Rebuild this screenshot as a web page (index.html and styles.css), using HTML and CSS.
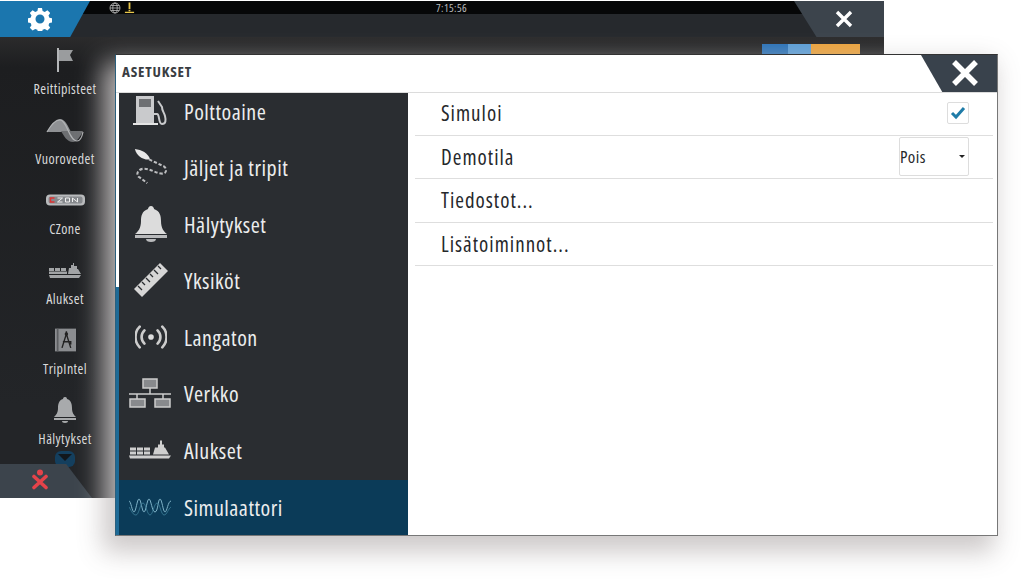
FILE: index.html
```html
<!DOCTYPE html>
<html lang="fi">
<head>
<meta charset="utf-8">
<title>Asetukset</title>
<link rel="stylesheet" href="styles.css">
</head>
<body>
<div class="backwin">
  <div class="topbar">
    <div class="gearTab">
      <svg class="gear" viewBox="0 0 24 24"><path fill-rule="evenodd" fill="#fff" d="M10 1h4l.6 3 2.2.9 2.6-1.7 2.8 2.8-1.7 2.6.9 2.2 3 .6v4l-3 .6-.9 2.2 1.7 2.6-2.8 2.8-2.6-1.7-2.200.9-.6 3h-4l-.6-3-2.200-.9-2.600 1.700-2.800-2.800 1.700-2.600-.9-2.200-3-.6v-4l3-.6.9-2.200-1.700-2.600 2.800-2.800 2.600 1.700 2.200-.9zM12 7.500a4.500 4.500 0 1 0 0 9 4.500 4.500 0 0 0 0-9z"/></svg>
    </div>
    <div class="status">
      <div class="statusIcons">
        <svg class="globe" viewBox="0 0 12 12"><g fill="none" stroke="#bbb" stroke-width=".8"><circle cx="6" cy="6" r="5"/><ellipse cx="6" cy="6" rx="2.200" ry="5"/><path d="M1 6h10M1.800 3.500h8.400M1.800 8.500h8.400"/></g></svg>
        <svg class="warn" viewBox="0 0 12 12"><path fill="#e8c64a" d="M5 0h2v7H5zM5 8h2v1.500H5zM1 10h10v1.500H1z"/></svg>
      </div>
      <span class="clock">7:15:56</span>
    </div>
    <div class="closeTab">
      <svg class="x1" viewBox="0 0 18 18"><path stroke="#fff" stroke-width="3.400" d="M2 2l14 14M16 2L2 16"/></svg>
    </div>
  </div>
  <div class="backMain">
    <aside class="side">
      <div class="sideItem">
        <svg class="sideIcon" viewBox="0 0 24 24"><path fill="#b4b6b8" d="M4 0h2v24H4z"/><path fill="#9a9c9e" d="M6 2h14l-3 5 3 6H6z"/></svg>
        <span>Reittipisteet</span>
      </div>
      <div class="sideItem">
        <svg class="sideIcon wave" viewBox="0 0 38 24"><path fill="#8f9194" d="M1 13C6 4 10 0 14 0c5 0 8 7 11 13z"/><path fill="#6d6f72" d="M15 12h22c-3 6-6 11-10 11-6 0-9-6-12-11z"/><path fill="none" stroke="#b0b2b4" stroke-width="1.200" d="M1 13C6 4 10 1 14 1c7 0 9 21 17 21 3 0 5-4 6-9"/></svg>
        <span>Vuorovedet</span>
      </div>
      <div class="sideItem">
        <svg class="sideIcon czone" viewBox="0 0 40 12"><rect x=".5" y=".5" width="39" height="11" rx="4" fill="#b8babc"/><rect x="3" y="2.500" width="34" height="7" rx="2" fill="#85888c"/><path stroke="#d33" stroke-width="1.500" fill="none" d="M9 4H5v4h4"/><path stroke="#eee" fill="none" d="M12 4h5l-5 4h5M20 4h4v4h-4zM27 8V4l5 4V4"/></svg>
        <span>CZone</span>
      </div>
      <div class="sideItem">
        <svg class="sideIcon ship" viewBox="0 0 34 16"><path fill="#a2a4a6" d="M1 12h32l-2 3H2zM1 5h5v3H1zM7 5h5v3H7zM13 5h5v3h-5zM1 8.500h18V11H1zM21 5h2V2h2V0h1v3h3v3h1l3 5H20z"/></svg>
        <span>Alukset</span>
      </div>
      <div class="sideItem">
        <svg class="sideIcon trip" viewBox="0 0 24 26"><rect width="24" height="26" fill="#8b8d90"/><rect x="2" width="2" height="26" fill="#5c5e61"/><path stroke="#222" stroke-width="1.600" fill="none" d="M13 3v3M13 6l-5 16M13 6l5 16M9 15h9v3"/><circle cx="13" cy="6" r="2" fill="#222"/></svg>
        <span>TripIntel</span>
      </div>
      <div class="sideItem">
        <svg class="sideIcon bell" viewBox="0 0 24 26"><path fill="#a8aaac" d="M12 0c2 0 2 2 2 2 4 1 5 5 5 9 0 5 2 7 4 9H1c2-2 4-4 4-9 0-4 1-8 5-9 0 0 0-2 2-2zM1 21h22v2H1zM9 24h6c0 1-1 2-3 2s-3-1-3-2z"/></svg>
        <span>Hälytykset</span>
      </div>
    </aside>
    <div class="bars"><i class="bar b1"></i><i class="bar b2"></i><i class="bar b3"></i></div>
  </div>
  <div class="moreBtn"><i class="moreArrow"></i></div>
  <div class="bottomTab">
    <svg class="person" viewBox="0 0 18 20"><circle cx="9" cy="3" r="3" fill="#e5434a"/><path stroke="#e5434a" stroke-width="3.600" stroke-linecap="round" d="M3 7l12 11M15 7L3 18"/></svg>
  </div>
</div>

<div class="dialog">
  <header class="dlgHead">
    <h1>ASETUKSET</h1>
    <div class="dlgClose">
      <svg class="x2" viewBox="0 0 26 26"><path stroke="#fff" stroke-width="5.500" d="M2 2l22 22M24 2L2 24"/></svg>
    </div>
  </header>
  <div class="dlgBody">
    <div class="scroll"><i class="thumb"></i></div>
    <nav class="nav">
      <ul class="navList">
        <li class="navItem">
          <svg class="navIcon" viewBox="0 0 36 32"><path fill="#c9cacc" d="M3 1h18v27H3z"/><path fill="#6e7073" d="M6 4h12v8H6z"/><path fill="#e4e4e4" d="M0 28h25v2H0z"/><path fill="none" stroke="#c9cacc" stroke-width="2" d="M21 19h3c3 0 1 10 5 10s4-4 3-8-3-5-3-9l-4-6"/></svg>
          <span>Polttoaine</span>
        </li>
        <li class="navItem">
          <svg class="navIcon" viewBox="0 0 36 38"><path fill="#e8e8e8" d="M1 0c7 1 14 4 16 11-7 1-14-3-16-11z"/><path fill="none" stroke="#bdbec0" stroke-width="2.200" stroke-dasharray="3.500 2" d="M16 11l15 7c4 2 4 8-1 8-7 0-13-6-21-5-6 1-7 7-3 9l8 6"/></svg>
          <span>Jäljet ja tripit</span>
        </li>
        <li class="navItem">
          <svg class="navIcon" viewBox="0 0 34 36"><path fill="#dcdcdc" d="M17 0c2 0 3 2 3 3 6 2 7 7 7 12 0 7 3 11 6 13H1c3-2 6-6 6-13 0-5 1-10 7-12 0-1 1-3 3-3z"/><path fill="#b9babc" d="M1 29h32v3H1z"/><path fill="#b9babc" d="M12 33h10c0 2-2 3-5 3s-5-1-5-3z"/></svg>
          <span>Hälytykset</span>
        </li>
        <li class="navItem">
          <svg class="navIcon" viewBox="0 0 36 36"><path fill="#d6d6d6" d="M1 27L27 1l8 8L9 35z"/><path stroke="#2a2d31" stroke-width="1.300" d="M5 24l4 4M9 20l3 3M13 16l4 4M17 12l3 3M21 8l4 4M25 4l3 3"/></svg>
          <span>Yksiköt</span>
        </li>
        <li class="navItem">
          <svg class="navIcon wifi" viewBox="0 0 34 26"><circle cx="17" cy="13" r="3" fill="#ddd"/><path fill="none" stroke="#ccc" stroke-width="2.800" stroke-linecap="round" d="M10 6c-4 4-4 10 0 14M24 6c4 4 4 10 0 14M5 2C-1 8-1 18 5 24M29 2c6 6 6 16 0 22"/></svg>
          <span>Langaton</span>
        </li>
        <li class="navItem">
          <svg class="navIcon wide" viewBox="0 0 42 30"><rect x="14" y="1" width="14" height="9" fill="#888a8d" stroke="#ccc" stroke-width="1.500"/><path stroke="#ccc" stroke-width="1.500" fill="none" d="M21 10v6M0 16h42M8 16v5M34 16v5"/><rect x="1" y="21" width="15" height="8" fill="#888a8d" stroke="#ccc" stroke-width="1.500"/><rect x="26" y="21" width="15" height="8" fill="#888a8d" stroke="#ccc" stroke-width="1.500"/></svg>
          <span>Verkko</span>
        </li>
        <li class="navItem">
          <svg class="navIcon wide" viewBox="0 0 42 19"><path fill="#cfcfcf" d="M0 15h42l-2 3H1zM1 7h6v3H1zM8 7h6v3H8zM15 7h6v3h-6zM1 11h6v3H1zM8 11h6v3H8zM15 11h6v3h-6zM26 7h3V4h2V0h2v4h2v3h1l4 7H24z"/></svg>
          <span>Alukset</span>
        </li>
        <li class="navItem active">
          <svg class="navIcon wide" viewBox="0 0 42 20"><path fill="none" stroke="#7fb3c8" stroke-width="1" d="M0 4c2 0 3 11 5 11s3-13 5-13 3 13 5 13 3-13 5-13 3 13 6 13 3-13 5-13 3 13 5 13 3-11 6-11"/><path fill="none" stroke="#3d7f99" stroke-width=".8" d="M0 10c3 5 4 8 7 8s4-12 7-12 4 12 7 12 4-12 7-12 4 12 7 12 4-6 7-8"/></svg>
          <span>Simulaattori</span>
        </li>
      </ul>
    </nav>
    <section class="content">
      <div class="row">
        <span>Simuloi</span>
        <span class="check"><svg viewBox="0 0 16 14"><path fill="none" stroke="#1f7ca8" stroke-width="3" d="M2 7l4 4 8-9"/></svg></span>
      </div>
      <div class="row">
        <span>Demotila</span>
        <span class="select"><span>Pois</span><i class="caret"></i></span>
      </div>
      <div class="row"><span>Tiedostot...</span></div>
      <div class="row"><span>Lisätoiminnot...</span></div>
    </section>
  </div>
</div>
</body>
</html>
```
FILE: styles.css
```css
* { box-sizing: border-box; }
html, body { margin: 0; padding: 0; }
body {
  position: relative;
  width: 1024px;
  height: 583px;
  overflow: hidden;
  background: #fff;
  font-family: "Open Sans", "Noto Sans", sans-serif;
  font-stretch: 75%;
}

/* back window */
.backwin {
  position: absolute;
  left: 0;
  top: 1px;
  width: 884px;
  height: 497px;
  background: #26292d;
  display: flex;
  flex-direction: column;
  overflow: hidden;
}
.topbar { display: flex; height: 36px; position: relative; }
.gearTab {
  width: 90px;
  height: 36px;
  flex: none;
  background: #1b76ae;
  clip-path: polygon(0 0, 100% 0, 78% 100%, 0 100%);
  display: flex;
  align-items: center;
  padding-left: 28px;
  position: relative;
  z-index: 1;
}
.gear { width: 24px; height: 24px; }
.status {
  flex: 1;
  height: 13px;
  background: #060708;
  display: flex;
  align-items: center;
  position: relative;
  margin-left: -8px;
  color: #b8babc;
  font-size: 11px;
  letter-spacing: .4px;
}
.statusIcons { display: flex; gap: 3px; padding-left: 27px; align-items: center; }
.globe { width: 12px; height: 12px; }
.warn { width: 11px; height: 12px; }
.clock { margin-left: 301px; }
.closeTab {
  width: 90px;
  height: 36px;
  flex: none;
  margin-left: -8px;
  background: #3c444c;
  clip-path: polygon(0 0, 100% 0, 100% 100%, 25% 100%);
  display: flex;
  align-items: center;
  justify-content: flex-end;
  padding: 0 31px 0 0;
  position: relative;
}
.x1 { width: 18px; height: 18px; }
.backMain {
  flex: 1;
  display: flex;
  background: linear-gradient(#2b2b2c, #1d1e20 30px, #232528 80%);
}
.side {
  width: 130px;
  display: flex;
  flex-direction: column;
  color: #d8d9da;
  font-size: 14px;
  letter-spacing: .4px;
}
.sideItem {
  width: 130px;
  height: 70px;
  display: flex;
  flex-direction: column;
  align-items: center;
  justify-content: flex-end;
  padding-bottom: 9px;
  gap: 7px;
  line-height: 18px;
}
.sideIcon { width: 24px; height: 26px; flex: none; }
.sideIcon.wave { width: 38px; height: 24px; }
.sideIcon.czone { width: 41px; height: 12px; margin-bottom: 7px; }
.sideIcon.ship { width: 34px; height: 16px; margin-bottom: 4px; }
.sideIcon.trip { width: 21px; height: 26px; }
.bars { display: flex; height: 10px; position: absolute; left: 762px; top: 43px; }
.bar { display: block; height: 10px; }
.b1 { width: 26px; background: #2a72b8; }
.b2 { width: 23px; background: #5a9ed8; }
.b3 { width: 49px; background: #eda33b; }
.bottomTab {
  position: absolute;
  left: 0;
  bottom: 0;
  width: 92px;
  height: 34px;
  background: #3c444c;
  clip-path: polygon(0 0, 72% 0, 100% 100%, 0 100%);
  display: flex;
  align-items: center;
  padding: 0 0 3px 31px;
}
.person { width: 18px; height: 21px; }
.moreBtn {
  position: absolute;
  left: 55px;
  top: 450px;
  width: 20px;
  height: 16px;
  border-radius: 6px;
  background: #143f5e;
  display: flex;
  justify-content: center;
  padding-top: 3px;
}
.moreArrow {
  display: block;
  width: 0;
  height: 0;
  border-left: 7px solid transparent;
  border-right: 7px solid transparent;
  border-top: 7px solid #12171c;
}

/* dialog */
.dialog {
  position: absolute;
  left: 115px;
  top: 54px;
  width: 883px;
  height: 482px;
  background: #fff;
  border: 1px solid #777;
  border-top-color: #333;
  border-left-color: #2a5f7d;
  box-shadow: -8px 12px 24px 4px rgba(200, 195, 195, .9);
  display: flex;
  flex-direction: column;
}
.dlgHead {
  height: 38px;
  flex: none;
  display: flex;
  align-items: center;
  justify-content: space-between;
  border-bottom: 1px solid #dcdcdc;
}
.dlgHead h1 {
  margin: 0 0 5px 6px;
  font-size: 15px;
  font-weight: 700;
  letter-spacing: .8px;
  color: #3a3d42;
}
.dlgClose {
  width: 76px;
  height: 37px;
  background: #39424c;
  clip-path: polygon(0 0, 100% 0, 100% 100%, 28% 100%);
  display: flex;
  align-items: center;
  justify-content: flex-end;
  padding: 0 19px 2px 0;
}
.x2 { width: 26px; height: 26px; }
.dlgBody { flex: 1; display: flex; min-height: 0; }
.scroll {
  width: 3px;
  flex: none;
  background: #fff;
  display: flex;
  flex-direction: column;
  justify-content: flex-end;
}
.thumb { display: block; height: 248px; background: #1e6a96; }
.nav { width: 289px; flex: none; background: #2a2d31; overflow: hidden; }
.navList { list-style: none; margin: -9px 0 0; padding: 0; }
.navItem {
  height: 56.500px;
  padding-bottom: 3px;
  display: flex;
  align-items: center;
  color: #ecedee;
  font-size: 22px;
  letter-spacing: .5px;
}
.navItem.active { background: #0b3b58; height: 57px; }
.navIcon { width: 36px; height: 36px; margin: 0 15px 0 14px; flex: none; }
.navIcon.wifi { width: 32px; margin: 0 17px 0 16px; }
.navIcon.wide { width: 42px; margin: 0 13px 0 10px; }
.content { flex: 1; padding: 0 4px 0 7px; margin-top: -1px; }
.row {
  height: 43.500px;
  border-bottom: 1px solid #dedede;
  display: flex;
  align-items: center;
  justify-content: space-between;
  padding: 0 24px 0 26px;
  font-size: 21px;
  letter-spacing: 1px;
  color: #26282b;
}
.check {
  width: 22px;
  height: 22px;
  border: 1px solid #ddd;
  border-radius: 2px;
  display: flex;
  align-items: center;
  justify-content: center;
}
.check svg { width: 16px; height: 14px; }
.select {
  width: 70px;
  height: 39px;
  border: 1px solid #ddd;
  border-radius: 2px;
  display: flex;
  align-items: center;
  justify-content: space-between;
  font-size: 17px;
  letter-spacing: .4px;
  padding: 0 2px 0 0;
}
.caret {
  width: 0;
  height: 0;
  margin-right: 1px;
  border-left: 3px solid transparent;
  border-right: 3px solid transparent;
  border-top: 3px solid #222;
}
```
